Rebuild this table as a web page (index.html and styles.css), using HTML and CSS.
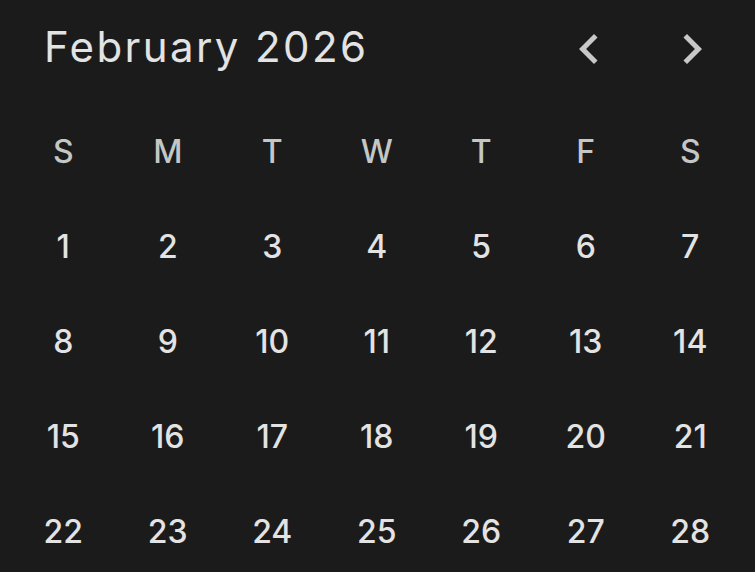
FILE: index.html
```html
<!DOCTYPE html>
<html lang="en">
<head>
<meta charset="utf-8">
<title>February 2026</title>
<link rel="stylesheet" href="styles.css">
</head>
<body>
<div class="cal">
  <div class="cal-head">
    <h1 class="cal-title">February 2026</h1>
    <div class="cal-nav">
      <button class="nav-btn" aria-label="Previous month">
        <svg viewBox="0 0 24 24" width="60" height="60"><path d="M15.41 7.41L14 6l-6 6 6 6 1.41-1.41L10.83 12z"/></svg>
      </button>
      <button class="nav-btn" aria-label="Next month">
        <svg viewBox="0 0 24 24" width="60" height="60"><path d="M8.59 16.59L10 18l6-6-6-6-1.41 1.41L13.17 12z"/></svg>
      </button>
    </div>
  </div>
  <div class="cal-grid">
    <div class="dow">S</div><div class="dow">M</div><div class="dow">T</div><div class="dow">W</div><div class="dow">T</div><div class="dow">F</div><div class="dow">S</div>
    <div class="day">1</div><div class="day">2</div><div class="day">3</div><div class="day">4</div><div class="day">5</div><div class="day">6</div><div class="day">7</div>
    <div class="day">8</div><div class="day">9</div><div class="day">10</div><div class="day">11</div><div class="day">12</div><div class="day">13</div><div class="day">14</div>
    <div class="day">15</div><div class="day">16</div><div class="day">17</div><div class="day">18</div><div class="day">19</div><div class="day">20</div><div class="day">21</div>
    <div class="day">22</div><div class="day">23</div><div class="day">24</div><div class="day">25</div><div class="day">26</div><div class="day">27</div><div class="day">28</div>
  </div>
</div>
</body>
</html>
```
FILE: styles.css
```css
html, body {
  margin: 0;
  padding: 0;
  background: #1b1b1b;
}
body {
  font-family: Inter, "Open Sans", sans-serif;
  color: #e3e3e3;
  overflow: hidden;
}
.cal {
  padding: 0 11px;
}
.cal-head {
  display: flex;
  align-items: center;
  justify-content: space-between;
  height: 96px;
}
.cal-title {
  margin: 0 0 2px 33px;
  font-size: 42px;
  font-weight: 400;
  line-height: 1;
  letter-spacing: 2.4px;
  color: #e3e3e3;
}
.cal-nav {
  display: flex;
  gap: 43px;
  margin-right: 22px;
  margin-top: 2px;
}
.nav-btn {
  width: 60px;
  height: 60px;
  padding: 0;
  border: 0;
  background: transparent;
  display: flex;
  align-items: center;
  justify-content: center;
}
.nav-btn svg {
  fill: #c8c8c8;
  display: block;
}
.cal-grid {
  display: grid;
  grid-template-columns: repeat(7, 104.5px);
  grid-auto-rows: 95px;
  margin-top: 8px;
}
.dow, .day {
  display: flex;
  align-items: center;
  justify-content: center;
  font-size: 32px;
  font-weight: 500;
}
.dow {
  color: #c4c7c5;
}
.day {
  color: #e3e3e3;
}
```
